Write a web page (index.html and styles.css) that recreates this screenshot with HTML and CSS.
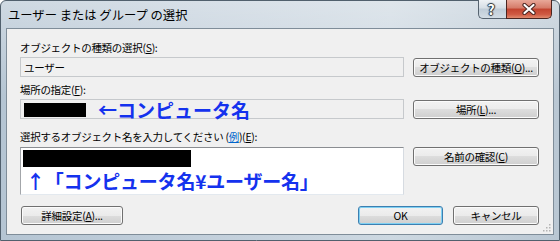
FILE: index.html
```html
<!DOCTYPE html>
<html lang="ja">
<head>
    <meta charset="UTF-8">
    <title>ユーザー または グループ の選択</title>
    <link rel="stylesheet" href="styles.css">
</head>
<body>
    <div class="window">
        <div class="titlebar">
            <span class="title">ユーザー または グループ の選択</span>
            <div class="caption-btns">
                <span class="cap-btn help">?</span>
                <span class="cap-btn close">
                    <svg width="14" height="12" viewBox="0 0 14 12">
                        <path d="M2.5 2 L11.5 10 M11.5 2 L2.5 10" stroke="#4b2622" stroke-width="4.2" stroke-linecap="round"/>
                        <path d="M2.5 2 L11.5 10 M11.5 2 L2.5 10" stroke="#ffffff" stroke-width="2.2" stroke-linecap="round"/>
                    </svg>
                </span>
            </div>
        </div>

        <div class="client">
            <div class="label first">オブジェクトの種類の選択(<u>S</u>):</div>
            <div class="row">
                <div class="field readonly">ユーザー</div>
                <button class="btn">オブジェクトの種類(<u>O</u>)...</button>
            </div>

            <div class="label second">場所の指定(<u>F</u>):</div>
            <div class="row">
                <div class="field readonly">
                    <span class="mask mask-short"></span>
                    <span class="note">←コンピュータ名</span>
                </div>
                <button class="btn">場所(<u>L</u>)...</button>
            </div>

            <div class="label third">選択するオブジェクト名を入力してください (<span class="link">例</span>)(<u>E</u>):</div>
            <div class="row top">
                <div class="field multi">
                    <span class="mask mask-long"></span>
                    <span class="note note-line">↑「コンピュータ名¥ユーザー名」</span>
                </div>
                <button class="btn">名前の確認(<u>C</u>)</button>
            </div>

            <div class="actions">
                <button class="btn advanced">詳細設定(<u>A</u>)...</button>
                <div class="spacer"></div>
                <button class="btn default ok">OK</button>
                <button class="btn cancel">キャンセル</button>
            </div>

            <svg class="grip" width="8" height="8" viewBox="0 0 8 8">
                <rect x="6" y="0" width="1.5" height="1.5" fill="#b4b4b4"/>
                <rect x="3" y="3" width="1.5" height="1.5" fill="#b4b4b4"/>
                <rect x="6" y="3" width="1.5" height="1.5" fill="#b4b4b4"/>
                <rect x="0" y="6" width="1.5" height="1.5" fill="#b4b4b4"/>
                <rect x="3" y="6" width="1.5" height="1.5" fill="#b4b4b4"/>
                <rect x="6" y="6" width="1.5" height="1.5" fill="#b4b4b4"/>
            </svg>
        </div>
    </div>
</body>
</html>
```

FILE: styles.css
```css
body {
    margin: 0;
    background: #ffffff;
    font-family: "Noto Sans CJK JP", sans-serif;
}
.window {
    width: 560px;
    height: 241px;
    box-sizing: border-box;
    display: flex;
    flex-direction: column;
    border: 1px solid #51606d;
    border-radius: 6px 6px 0 0;
    background:
        linear-gradient(rgba(255,255,255,0.35), rgba(255,255,255,0) 40%),
        linear-gradient(to right, #b5c5d3 0%, #c2cfdb 35%, #cdd8e1 70%, #b9c7d3 100%);
}
.titlebar {
    height: 27px;
    display: flex;
    justify-content: space-between;
    padding: 0 7px 0 7px;
}
.title {
    align-self: center;
    font-size: 12.3px;
    color: #000;
    margin-top: 1px;
}
.caption-btns {
    display: flex;
    align-self: flex-start;
    height: 19px;
    margin-top: -1px;
}
.cap-btn {
    display: flex;
    align-items: center;
    justify-content: center;
    box-sizing: border-box;
    height: 19px;
}
.help {
    width: 28px;
    border: 1px solid #56636f;
    border-top: none;
    border-right: none;
    border-radius: 0 0 0 5px;
    background: linear-gradient(#eef2f5 0%, #d6dee5 45%, #bfccd7 50%, #d3dde5 100%);
    color: #fff;
    font-size: 14px;
    font-weight: bold;
    padding-right: 3px;
    text-shadow: 0 0 1px #2a3640, 1px 0 1px #2a3640, -1px 0 1px #2a3640, 0 1px 1px #2a3640, 0 -1px 1px #2a3640;
}
.close {
    width: 46px;
    border: 1px solid #4a2520;
    border-top: none;
    border-radius: 0 0 5px 0;
    background: linear-gradient(#e8a899 0%, #d57a68 45%, #c2432f 50%, #cf5a43 80%, #e08a6e 100%);
}
.client {
    flex: 1;
    position: relative;
    margin: 0 5px 5px 5px;
    border: 1px solid #7f8d99;
    background: #f0f0f0;
    padding: 0 14px 0 13px;
    font-size: 10.5px;
    letter-spacing: -0.3px;
    color: #000;
}
.label {
    height: 13px;
    line-height: 13px;
    white-space: nowrap;
}
.label.first { margin-top: 12px; }
.label.second { margin-top: 6px; }
.label.third { margin-top: 11px; }
.link {
    color: #0066cc;
    text-decoration: underline;
}
.row {
    display: flex;
    align-items: center;
    gap: 9px;
    margin-top: 3px;
}
.row.top {
    align-items: flex-start;
    margin-top: 4px;
}
.field {
    width: 384px;
    height: 20px;
    box-sizing: border-box;
    display: flex;
    align-items: center;
    padding: 0 3px;
    white-space: nowrap;
}
.readonly {
    border: 1px solid #c6c9cc;
    background: #f0f0f0;
}
.multi {
    height: 48px;
    flex-direction: column;
    align-items: flex-start;
    padding: 2px 2px 0 2px;
    background: #ffffff;
    border: 1px solid;
    border-color: #8a8d91 #d6dbe1 #e3e9ef #a3a6aa;
}
.mask {
    display: block;
    background: #000;
    flex-shrink: 0;
}
.mask-short {
    width: 62px;
    height: 14px;
    margin-top: 2px;
}
.mask-long {
    width: 168px;
    height: 17px;
}
.note {
    color: #1432ee;
    font-size: 19px;
    font-weight: bold;
    letter-spacing: 0;
    line-height: 20px;
    margin-left: 12px;
    margin-top: 2px;
}
.note-line {
    margin: 2px 0 0 3px;
    line-height: 24px;
    letter-spacing: -0.2px;
}
.btn {
    width: 126px;
    height: 19px;
    box-sizing: border-box;
    padding: 0;
    border: 1px solid #707070;
    border-radius: 3px;
    background: linear-gradient(#f2f2f2 0%, #ebebeb 50%, #dddddd 50%, #cfcfcf 100%);
    box-shadow: inset 0 0 0 1px #fbfbfb;
    font-family: "Noto Sans CJK JP", sans-serif;
    font-size: 10.5px;
    letter-spacing: -0.3px;
    color: #000;
    line-height: 15px;
    white-space: nowrap;
}
.actions {
    display: flex;
    align-items: center;
    margin-top: 11px;
    padding-left: 1px;
}
.spacer { flex: 1; }
.advanced { width: 102px; }
.ok {
    width: 85px;
    margin-right: 10px;
}
.cancel { width: 86px; }
.btn.default {
    border-color: #3c7fb1;
    box-shadow: inset 0 0 0 1px #7fd0f2;
}
.grip {
    position: absolute;
    right: 2px;
    bottom: 2px;
}
```
